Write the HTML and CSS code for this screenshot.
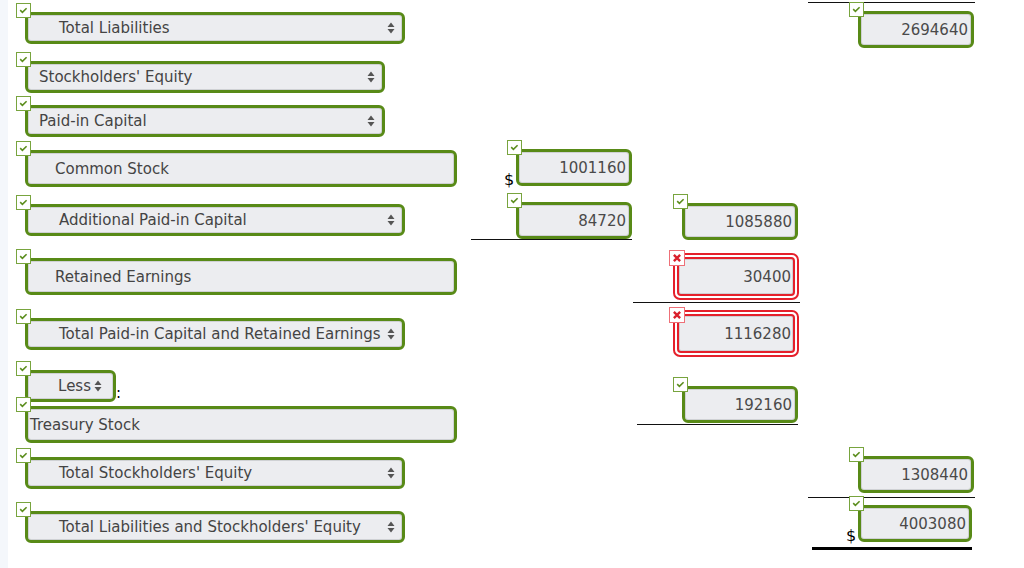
FILE: index.html
```html
<!DOCTYPE html>
<html lang="en">
<head>
  <meta charset="UTF-8">
  <title>Stockholders' Equity</title>
  <link rel="stylesheet" href="styles.css">
</head>
<body>
  <svg width="0" height="0" class="defs">
    <symbol id="tick" viewBox="0 0 13 13"><path d="M3.2 6.2 L5.4 8.3 L9.6 4.2" fill="none" stroke="#5b8d1d" stroke-width="1.6"/></symbol>
    <symbol id="cross" viewBox="0 0 13 13"><path d="M3.6 3.6 L9.4 9.4 M9.4 3.6 L3.6 9.4" fill="none" stroke="#d9202c" stroke-width="2.2"/></symbol>
    <symbol id="updown" viewBox="0 0 8 12"><path d="M0.5 5 L4 0.5 L7.5 5 Z M0.5 7 L4 11.5 L7.5 7 Z" fill="#555"/></symbol>
  </svg>

  <div class="sheet">

    <div class="row h50">
      <div class="cell c1 mt12">
        <div class="box sel w380 ind"><svg class="ok"><use href="#tick"/></svg><span>Total Liabilities</span><svg class="arrows"><use href="#updown"/></svg></div>
      </div>
      <div class="cell c4">
        <div class="topline pl50">
          <div class="box num"><svg class="ok"><use href="#tick"/></svg>2694640</div>
        </div>
      </div>
    </div>

    <div class="row h45">
      <div class="cell c1 mt11">
        <div class="box sel w360 flush"><svg class="ok"><use href="#tick"/></svg><span>Stockholders' Equity</span><svg class="arrows"><use href="#updown"/></svg></div>
      </div>
    </div>

    <div class="row h45">
      <div class="cell c1 mt10">
        <div class="box sel w360 flush"><svg class="ok"><use href="#tick"/></svg><span>Paid-in Capital</span><svg class="arrows"><use href="#updown"/></svg></div>
      </div>
    </div>

    <div class="row h53">
      <div class="cell c1 mt10">
        <div class="box input w432"><svg class="ok"><use href="#tick"/></svg>Common Stock</div>
      </div>
      <div class="cell c2 mt9">
        <div class="money pl33"><span class="dollar">$</span>
          <div class="box num"><svg class="ok"><use href="#tick"/></svg>1001160</div>
        </div>
      </div>
    </div>

    <div class="row h54">
      <div class="cell c1 mt11">
        <div class="box sel w380 ind"><svg class="ok"><use href="#tick"/></svg><span>Additional Paid-in Capital</span><svg class="arrows"><use href="#updown"/></svg></div>
      </div>
      <div class="cell c2 mt9">
        <div class="uline w161 pl45">
          <div class="box num"><svg class="ok"><use href="#tick"/></svg>84720</div>
        </div>
      </div>
      <div class="cell c3 mt10 pl49">
        <div class="box num"><svg class="ok"><use href="#tick"/></svg>1085880</div>
      </div>
    </div>

    <div class="row h59">
      <div class="cell c1 mt11">
        <div class="box input w432"><svg class="ok"><use href="#tick"/></svg>Retained Earnings</div>
      </div>
      <div class="cell c3 mt6">
        <div class="uline w167 pb2 pl40">
          <div class="bad"><svg class="no"><use href="#cross"/></svg><div class="box num">30400</div></div>
        </div>
      </div>
    </div>

    <div class="row h52">
      <div class="cell c1 mt12">
        <div class="box sel w380 ind"><svg class="ok"><use href="#tick"/></svg><span>Total Paid-in Capital and Retained Earnings</span><svg class="arrows"><use href="#updown"/></svg></div>
      </div>
      <div class="cell c3 mt4 pl40">
        <div class="bad"><svg class="no"><use href="#cross"/></svg><div class="box num">1116280</div></div>
      </div>
    </div>

    <div class="row h88">
      <div class="cell c1 mt12">
        <div class="less-line">
          <div class="box sel less"><svg class="ok"><use href="#tick"/></svg><span>Less</span><svg class="arrows"><use href="#updown"/></svg></div>
          <span class="colon">:</span>
        </div>
        <div class="box input w432 plain"><svg class="ok"><use href="#tick"/></svg>Treasury Stock</div>
      </div>
      <div class="cell c3 mt28">
        <div class="uline ml4 w161 pb1 pl45">
          <div class="box num"><svg class="ok"><use href="#tick"/></svg>192160</div>
        </div>
      </div>
    </div>

    <div class="row h54">
      <div class="cell c1 mt11">
        <div class="box sel w380 ind"><svg class="ok"><use href="#tick"/></svg><span>Total Stockholders' Equity</span><svg class="arrows"><use href="#updown"/></svg></div>
      </div>
      <div class="cell c4 mt10">
        <div class="uline w167 pb4 pl50">
          <div class="box num"><svg class="ok"><use href="#tick"/></svg>1308440</div>
        </div>
      </div>
    </div>

    <div class="row h68">
      <div class="cell c1 mt11">
        <div class="box sel w380 ind"><svg class="ok"><use href="#tick"/></svg><span>Total Liabilities and Stockholders' Equity</span><svg class="arrows"><use href="#updown"/></svg></div>
      </div>
      <div class="cell c4 mt5">
        <div class="money total ml4 pl34"><span class="dollar">$</span>
          <div class="box num"><svg class="ok"><use href="#tick"/></svg>4003080</div>
        </div>
      </div>
    </div>

  </div>
</body>
</html>
```

FILE: styles.css
```css
body {
  margin: 0;
  background-color: #f4f7fb;
  font-family: "DejaVu Sans", Verdana, sans-serif;
  font-size: 15px;
  color: #444;
}

* {
  box-sizing: border-box;
}

.defs {
  position: absolute;
}

.sheet {
  margin-left: 8px;
  height: 568px;
  background-color: white;
  overflow: hidden;
}

.row {
  display: grid;
  grid-template-columns: 463px 162px 175px 167px;
  align-items: start;
}

.h45 { height: 45px; }
.h50 { height: 50px; }
.h52 { height: 52px; }
.h53 { height: 53px; }
.h54 { height: 54px; }
.h59 { height: 59px; }
.h68 { height: 68px; }
.h88 { height: 88px; }

.c1 { grid-column: 1; padding-left: 17px; }
.c2 { grid-column: 2; }
.c3 { grid-column: 3; }
.c4 { grid-column: 4; }

.mt4 { margin-top: 4px; }
.mt5 { margin-top: 5px; }
.mt6 { margin-top: 6px; }
.mt9 { margin-top: 9px; }
.mt10 { margin-top: 10px; }
.mt11 { margin-top: 11px; }
.mt12 { margin-top: 12px; }
.mt28 { margin-top: 28px; }

.ml4 { margin-left: 4px; }
.pl33 { padding-left: 33px; }
.pl34 { padding-left: 34px; }
.pl40 { padding-left: 40px; }
.pl45 { padding-left: 45px; }
.pl49 { padding-left: 49px; }
.pl50 { padding-left: 50px; }
.pb1 { padding-bottom: 1px; }
.pb2 { padding-bottom: 2px; }
.pb4 { padding-bottom: 4px; }

/* champs */
.box {
  position: relative;
  display: flex;
  align-items: center;
  height: 32px;
  border: 3px solid #588a17;
  border-radius: 6px;
  background-color: #ecedf0;
  box-shadow: inset 0 0 0 1px #cfd1d4;
  white-space: nowrap;
}

.w360 { width: 360px; }
.w380 { width: 380px; }
.w432 { width: 432px; }

.sel.ind { padding-left: 31px; }
.sel.flush { padding-left: 11px; }

.input {
  height: 37px;
  padding-left: 27px;
}

.input.plain { padding-left: 2px; }

.num {
  width: 116px;
  height: 37px;
  justify-content: flex-end;
  padding-right: 3px;
  color: #4a4a4a;
}

.arrows {
  width: 8px;
  height: 12px;
  margin-left: auto;
  margin-right: 7px;
  flex-shrink: 0;
}

.less-line {
  display: flex;
  align-items: flex-end;
  margin-bottom: 4px;
}

.less {
  width: 91px;
  justify-content: flex-end;
  padding-right: 11px;
}

.less .arrows {
  margin-left: 3px;
  margin-right: 0;
}

.colon {
  color: #000;
  line-height: 18px;
}

/* coches */
.ok, .no {
  position: absolute;
  top: -12px;
  left: -12px;
  width: 15px;
  height: 15px;
  border: 1px solid #78a43e;
  background-color: white;
}

.no {
  top: -5px;
  left: -6px;
  width: 16px;
  height: 16px;
  border-color: #ee7078;
  z-index: 1;
}

.bad {
  position: relative;
  width: 126px;
  height: 47px;
  padding: 2px;
  border: 2px solid #e5202b;
  border-radius: 7px;
  background-color: white;
}

.bad .box {
  width: 100%;
  height: 100%;
  border: 2px solid #e5202b;
  border-radius: 4px;
  padding-right: 2px;
}

/* soulignements */
.uline { border-bottom: 1px solid #111; }
.w161 { width: 161px; }
.w167 { width: 167px; }

.topline {
  width: 167px;
  margin-top: 2px;
  border-top: 1px solid #111;
  padding-top: 8px;
}

.money {
  display: flex;
  align-items: flex-end;
}

.money.total {
  width: 160px;
  padding-bottom: 5px;
  border-bottom: 3px solid #000;
}

.dollar {
  width: 12px;
  color: #000;
  font-size: 16px;
  line-height: 1;
  margin-bottom: -2px;
}
```
